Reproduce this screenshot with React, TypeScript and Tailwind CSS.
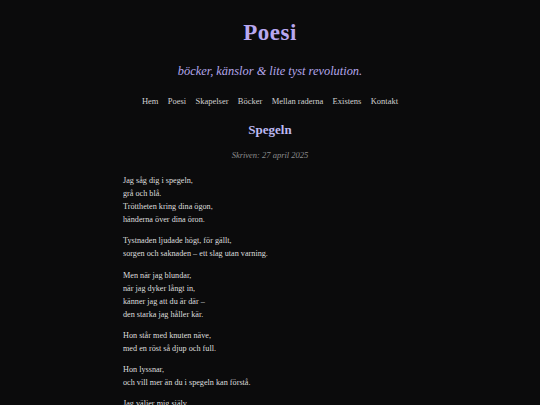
import React from "react";

const stanzas: string[][] = [
  ["Jag såg dig i spegeln,", "grå och blå.", "Tröttheten kring dina ögon,", "händerna över dina öron."],
  ["Tystnaden ljudade högt, för gällt,", "sorgen och saknaden – ett slag utan varning."],
  ["Men när jag blundar,", "när jag dyker långt in,", "känner jag att du är där –", "den starka jag håller kär."],
  ["Hon står med knuten näve,", "med en röst så djup och full."],
  ["Hon lyssnar,", "och vill mer än du i spegeln kan förstå."],
  ["Jag väljer mig själv,", "varje dag."],
];

const nav = ["Hem", "Poesi", "Skapelser", "Böcker", "Mellan raderna", "Existens", "Kontakt"];

export default function App() {
  return (
    <div className="min-h-screen bg-[#0b0b0c] text-[#d6d6d6]" style={{ fontFamily: '"Liberation Serif", "DejaVu Serif", serif' }}>
      <header className="flex flex-col items-center pt-[19px]">
        <h1 className="text-[23px] leading-[28px] font-bold text-[#b9a8f0] tracking-[0.5px]">Poesi</h1>
        <p className="mt-[16px] text-[12.4px] leading-[16px] italic text-[#b3a6ea]">böcker, känslor &amp; lite tyst revolution.</p>
        <nav className="mt-[16px] flex gap-[9.3px] text-[8.5px] leading-[12px] text-[#d0d0d0]">
          {nav.map((n) => (
            <span key={n}>{n}</span>
          ))}
        </nav>
      </header>
      <main className="mx-auto w-[294px] pt-[15px]">
        <h2 className="text-center text-[13px] leading-[16px] font-bold text-[#bdb9f2]">Spegeln</h2>
        <p className="mt-[11px] text-center text-[8.5px] leading-[12px] italic text-[#8c8c8c]">Skriven: 27 april 2025</p>
        <div className="mt-[13px] flex flex-col gap-[8.3px] text-[8.2px] leading-[13px] text-[#dedede]">
          {stanzas.map((s, i) => (
            <p key={i}>
              {s.map((l, j) => (
                <React.Fragment key={j}>
                  {l}
                  {j < s.length - 1 && <br />}
                </React.Fragment>
              ))}
            </p>
          ))}
        </div>
      </main>
    </div>
  );
}
